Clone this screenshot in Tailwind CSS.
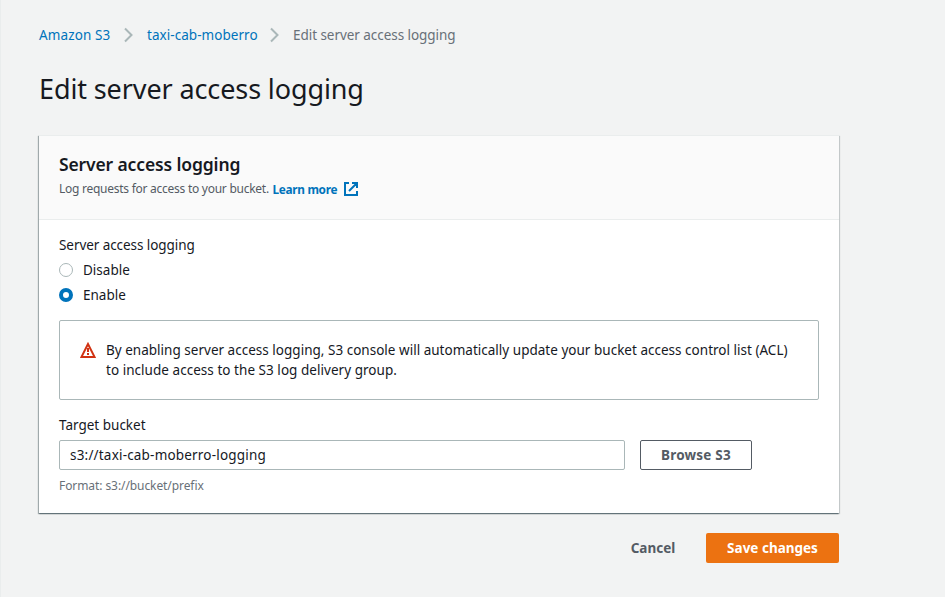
<!DOCTYPE html>
<html lang="en">
<head>
<meta charset="utf-8">
<title>Edit server access logging</title>
<script src="https://cdn.jsdelivr.net/npm/@tailwindcss/browser@4"></script>
</head>
<body class="h-[597px] overflow-hidden border-l border-[#eaeded] bg-[#f2f3f3] pl-[38px] pt-[25px] font-['Noto_Sans',sans-serif] text-[14px] leading-5 text-[#16191f]">
<nav class="flex h-5 items-center whitespace-nowrap text-[#0073bb]">
  <a class="w-[72px]"><span class="text-[13.5px] tracking-[0.12px]">Amazon S3</span></a>
  <svg class="ml-[13px] mr-[13px] h-4 w-[10px]" viewBox="0 0 10 16" fill="none" stroke="#aab7b8" stroke-width="2"><path d="M1 1.5 7.5 8 1 14.5"/></svg>
  <a class="w-[111px]"><span class="text-[13.5px] tracking-[0.05px]">taxi-cab-moberro</span></a>
  <svg class="ml-[12px] mr-[13px] h-4 w-[10px]" viewBox="0 0 10 16" fill="none" stroke="#aab7b8" stroke-width="2"><path d="M1 1.5 7.5 8 1 14.5"/></svg>
  <span class="text-[13.5px] tracking-[-0.05px] text-[#687078]">Edit server access logging</span>
</nav>
<main class="w-[800px]">
  <h1 class="mt-[26px] h-9 whitespace-nowrap text-[27px] leading-9 tracking-[-0.11px]">Edit server access logging</h1>
  <section class="mt-[28px] h-[378px] bg-white shadow-[0_1px_1px_0_rgba(0,28,36,0.3),1px_1px_1px_0_rgba(0,28,36,0.15),-1px_1px_1px_0_rgba(0,28,36,0.3)]">
    <header class="h-[85px] border-b border-t border-[#eaeded] bg-[#fafafa] px-5 pt-4">
      <h2 class="h-6 text-[17.5px] font-semibold leading-6 tracking-[-0.13px]">Server access logging</h2>
      <p class="mt-[3px] flex h-5 items-center whitespace-nowrap text-[12px] text-[#545b64]"><span class="w-[213.5px] tracking-[-0.26px]">Log requests for access to your bucket.</span><a class="w-[71.5px] text-[11.8px] font-bold tracking-[-0.3px] text-[#0073bb]">Learn more</a>
      <svg class="h-[14px] w-[14px]" viewBox="0 0 14 14" fill="none" stroke="#0073bb" stroke-width="2"><path d="M5 1H1v12h12V9M8 1h5v5M13 1 5 9"/></svg></p>
    </header>
    <div class="px-5 pt-[15px]">
      <div class="text-[13.5px] tracking-[-0.07px]">Server access logging</div>
      <label class="mt-[5px] flex h-5 items-center text-[13.5px]"><span class="mr-[10px] h-[14px] w-[14px] rounded-full border border-[#aab7b8] bg-white"></span><span>Disable</span></label>
      <label class="mt-[5px] flex h-5 items-center text-[13.5px]"><span class="mr-[10px] h-[14px] w-[14px] rounded-full border-4 border-[#0073bb] bg-white"></span><span>Enable</span></label>
      <div class="mt-[15px] flex h-20 rounded-[2px] border border-[#aab7b8] pl-5 pt-[19px]">
        <svg class="mr-[10px] mt-[2px] h-4 w-4 shrink-0" viewBox="0 0 16 16" fill="none" stroke="#d13212" stroke-width="2"><path d="M8 2 1.5 14.9h13Z"/><path d="M8 6v4M8 11v2"/></svg>
        <p class="whitespace-nowrap text-[13.5px]"><span class="tracking-[0.015px]">By enabling server access logging, S3 console will automatically update your bucket access control list (ACL)</span><br><span class="tracking-[0.04px]">to include access to the S3 log delivery group.</span></p>
      </div>
      <div class="mt-[15px] text-[13.5px]">Target bucket</div>
      <div class="mt-[5px] flex h-[30px]">
        <div class="flex w-[566px] items-center rounded-[2px] border border-[#aab7b8] pl-[10px] text-[13.5px] tracking-[0.19px]">s3://taxi-cab-moberro-logging</div>
        <button class="ml-[15px] w-[112px] rounded-[2px] border border-[#545b64] text-[13.5px] font-bold tracking-[0.2px] text-[#545b64]">Browse S3</button>
      </div>
      <div class="mt-[6px] text-[12px] tracking-[-0.08px] text-[#687078]">Format: s3://bucket/prefix</div>
    </div>
  </section>
  <footer class="mt-5 flex h-[30px] justify-end text-[13.5px] font-bold">
    <button class="mr-[10px] w-[86px] text-[#545b64]">Cancel</button>
    <button class="w-[133px] rounded-[2px] bg-[#ec7211] text-white">Save changes</button>
  </footer>
</main>
</body>
</html>
